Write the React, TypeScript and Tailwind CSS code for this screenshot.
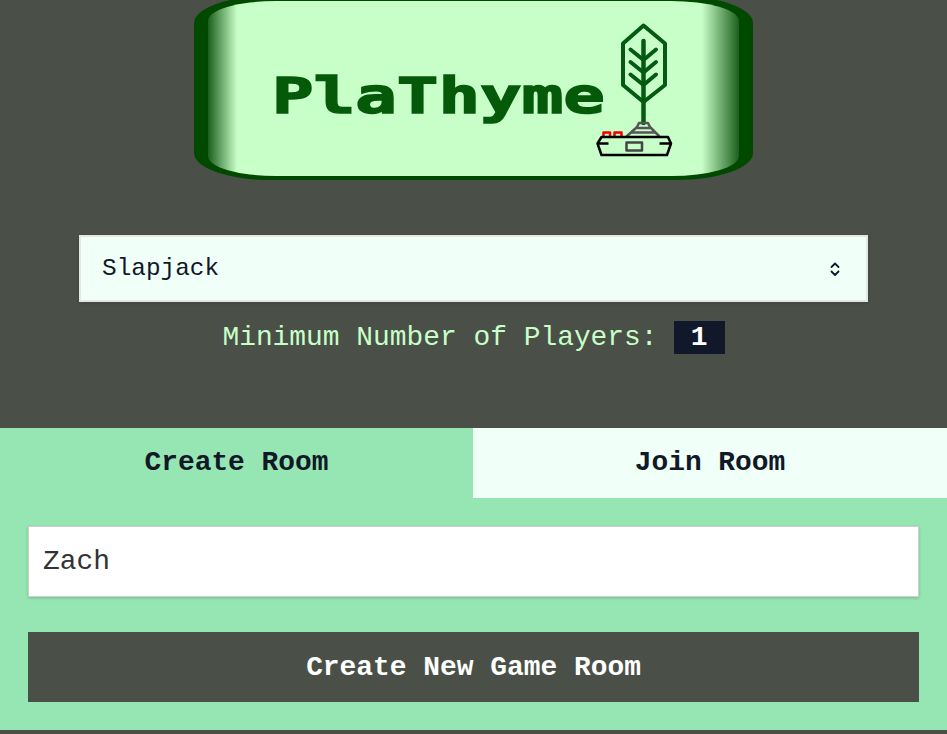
import React, { useState } from 'react';

const Logo: React.FC = () => (
  <svg className="block mx-auto" width={559} height={180} viewBox="194 0 559 180" xmlns="http://www.w3.org/2000/svg">
    <defs>
      <linearGradient id="edge" x1="208" x2="739" y1="0" y2="0" gradientUnits="userSpaceOnUse">
        <stop offset="0" stopColor="#1c5f1c" />
        <stop offset="0.055" stopColor="#c8ffc8" />
        <stop offset="0.93" stopColor="#c8ffc8" />
        <stop offset="1" stopColor="#1c5f1c" />
      </linearGradient>
    </defs>
    <rect x="194" y="-4" width="559" height="184" rx="76" ry="27" fill="#004a00" />
    <rect x="208" y="1" width="531" height="175" rx="68" ry="20" fill="url(#edge)" />
    <text
      x="272"
      y="113"
      textLength="333"
      lengthAdjust="spacingAndGlyphs"
      fontFamily="'DejaVu Sans Mono', monospace"
      fontWeight="700"
      fontSize="50"
      fill="#045a08"
      stroke="#045a08"
      strokeWidth="1.500"
      strokeLinejoin="miter"
    >
      PlaThyme
    </text>

    {/* leaf */}
    <g fill="none" stroke="#045a10" strokeLinecap="round" strokeLinejoin="round">
      <path d="M643.500 25.500 L665 43.500 V85 L643.500 102 L623 85 V43.500 Z" strokeWidth="4" />
      <path d="M643.500 41 V123" strokeWidth="4.500" />
      <path d="M630.500 49.500 L643.500 60 L656 49.500 M630.500 62 L643.500 72.500 L656 62 M630.500 74.500 L643.500 85 L656 74.500" strokeWidth="4" />
    </g>

    {/* controller */}
    <g fill="none" strokeLinejoin="round">
      <path d="M603.500 136.500 V132.500 H610 V136.500 M614.500 136.500 V132.500 H621.500 V136.500" stroke="#f00000" strokeWidth="2.500" />
      <path d="M626.500 136.500 L637 127 L639 123 H648 L650 127 L659.500 136.500 M635 128 H651 M630.500 132.500 H655.500" stroke="#555555" strokeWidth="2.500" />
      <path d="M601.500 137 H668 L671 143.500 L667 155 H601.500 L597.500 143.500 Z" stroke="#000000" strokeWidth="2.500" />
      <path d="M597.500 143.500 H608.500 M659.500 143.500 H671" stroke="#000000" strokeWidth="2.500" />
      <rect x="626.500" y="142.500" width="15.500" height="8" stroke="#444444" strokeWidth="2.500" />
    </g>
  </svg>
);

const App: React.FC = () => {
  const [tab, setTab] = useState<'create' | 'join'>('create');
  const [name, setName] = useState('Zach');

  return (
    <div className="min-h-screen bg-[#4a4f48] font-['Liberation_Mono',monospace] text-[27.9px] overflow-hidden">
      <Logo />

      <div className="mx-[79px] mt-[55px] relative">
        <select
          defaultValue="Slapjack"
          className="block w-full h-[67px] appearance-none bg-[#f0fff8] border-2 border-[#e4e7e6] pl-[21px] pt-[2px] text-[24.4px] text-[#111827] rounded-none shadow-[0_1px_3px_rgba(0,0,0,0.15)] outline-none"
        >
          <option>Slapjack</option>
          <option>Tic Tac Toe</option>
        </select>
        <svg
          className="absolute right-[26px] top-[26px] pointer-events-none"
          width="14"
          height="16"
          viewBox="0 0 14 16"
          fill="none"
          stroke="#111827"
          strokeWidth="1.800"
          strokeLinecap="round"
          strokeLinejoin="round"
        >
          <path d="M3.500 6 L7 2.500 L10.500 6 M3.500 10.500 L7 14 L10.500 10.500" />
        </svg>
      </div>

      <div className="mt-[19px] h-[33px] flex justify-center items-center text-[#c8ffc8]">
        <span>Minimum Number of Players:</span>
        <span className="ml-[16px] w-[51px] h-[33px] flex items-center justify-center bg-[#10182a] text-white font-bold">1</span>
      </div>

      <div className="mt-[74px] bg-[#96e6b3] h-[302px]">
        <div className="grid grid-cols-[473px_1fr] h-[70px] font-bold text-[#111827]">
          <button
            onClick={() => setTab('create')}
            className={tab === 'create' ? 'bg-[#96e6b3]' : 'bg-[#f0fff8]'}
          >
            Create Room
          </button>
          <button
            onClick={() => setTab('join')}
            className={tab === 'join' ? 'bg-[#96e6b3]' : 'bg-[#f0fff8]'}
          >
            Join Room
          </button>
        </div>

        <div className="px-[28px] pt-[28px] flex flex-col gap-[35px]">
          <input
            value={name}
            onChange={(e) => setName(e.target.value)}
            className="block w-full h-[71px] bg-white border border-[#cfcfcf] px-[14px] text-[#333333] outline-none shadow-[0_1px_3px_rgba(0,0,0,0.2)]"
          />
          <button className="h-[70px] pt-[2px] bg-[#4a4f48] text-white font-bold">Create New Game Room</button>
        </div>
      </div>
    </div>
  );
};

export default App;
